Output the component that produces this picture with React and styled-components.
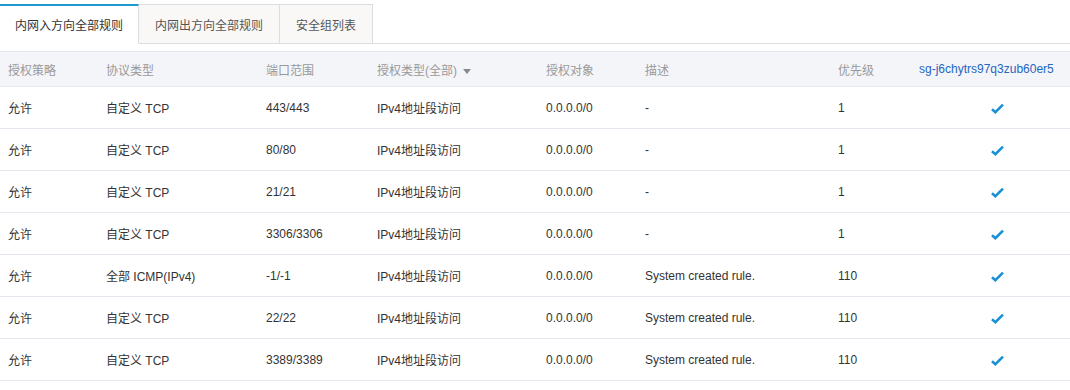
import React from "react";
import styled, { createGlobalStyle } from "styled-components";

const GlobalStyle = createGlobalStyle`
    body {
        margin: 0;
        background: #fff;
        font-family: "Liberation Sans", "Noto Sans CJK SC", sans-serif;
        font-size: 12px;
        color: #333;
    }
`;

const Page = styled.div`
    padding-top: 4px;
    width: 1070px;
`;

const TabBar = styled.div`
    display: flex;
    border-bottom: 1px solid #ddd;
    height: 39px;
`;

const Tab = styled.div`
    box-sizing: border-box;
    flex-shrink: 0;
    height: 40px;
    display: flex;
    align-items: center;
    justify-content: center;
    white-space: nowrap;
    font-size: 12px;
    color: ${(props) => (props.active ? "#333" : "#555")};
    background: ${(props) => (props.active ? "#fff" : "#f9f8f7")};
    border: 1px solid #ddd;
    border-top: ${(props) => (props.active ? "2px solid #1b9ad0" : "1px solid #ddd")};
    border-left: ${(props) => (props.active ? "none" : "1px solid #ddd")};
    border-bottom: ${(props) => (props.active ? "1px solid #fff" : "1px solid #ddd")};
    margin-left: ${(props) => (props.active ? "0" : "-1px")};
    width: ${(props) => props.w}px;
    z-index: ${(props) => (props.active ? 1 : 0)};
`;

const Table = styled.table`
    margin-top: 7px;
    width: 1070px;
    border-collapse: collapse;
    table-layout: fixed;
`;

const HeadCell = styled.th`
    height: 34px;
    padding: 0 0 0 8px;
    text-align: left;
    font-weight: normal;
    color: #999;
    background: #f4f5f9;
    border-top: 1px solid #e3e7ee;
    border-bottom: 1px solid #e3e7ee;
    white-space: nowrap;
`;

const LinkText = styled.span`
    color: #2566c2;
`;

const Caret = styled.span`
    display: inline-block;
    margin-left: 6px;
    vertical-align: middle;
    border-left: 4px solid transparent;
    border-right: 4px solid transparent;
    border-top: 5px solid #888;
`;

const Cell = styled.td`
    height: 41px;
    padding: 0 0 0 8px;
    border-bottom: 1px solid #e3e7ee;
    color: #333;
    white-space: nowrap;
`;

const CheckWrap = styled.span`
    display: inline-block;
    padding-left: 72px;
    line-height: 0;
    vertical-align: middle;
`;

const widths = [98, 160, 111, 169, 99, 193, 81, 159];

const headers = ["授权策略", "协议类型", "端口范围", "授权类型(全部)", "授权对象", "描述", "优先级"];

const rows = [
    ["允许", "自定义 TCP", "443/443", "IPv4地址段访问", "0.0.0.0/0", "-", "1"],
    ["允许", "自定义 TCP", "80/80", "IPv4地址段访问", "0.0.0.0/0", "-", "1"],
    ["允许", "自定义 TCP", "21/21", "IPv4地址段访问", "0.0.0.0/0", "-", "1"],
    ["允许", "自定义 TCP", "3306/3306", "IPv4地址段访问", "0.0.0.0/0", "-", "1"],
    ["允许", "全部 ICMP(IPv4)", "-1/-1", "IPv4地址段访问", "0.0.0.0/0", "System created rule.", "110"],
    ["允许", "自定义 TCP", "22/22", "IPv4地址段访问", "0.0.0.0/0", "System created rule.", "110"],
    ["允许", "自定义 TCP", "3389/3389", "IPv4地址段访问", "0.0.0.0/0", "System created rule.", "110"],
];

function Check() {
    return (
        <svg width="13" height="11" viewBox="0 0 13 11">
            <path d="M1 6.2 L4.4 9.2 L12 1.6" fill="none" stroke="#1a90d6" strokeWidth="2.6" strokeLinejoin="miter" />
        </svg>
    );
}

export default function App() {
    return (
        <Page>
            <GlobalStyle />
            <TabBar>
                <Tab active w={139}>内网入方向全部规则</Tab>
                <Tab w={142}>内网出方向全部规则</Tab>
                <Tab w={94}>安全组列表</Tab>
            </TabBar>
            <Table>
                <colgroup>
                    {widths.map((w, i) => (
                        <col key={i} style={{ width: w }} />
                    ))}
                </colgroup>
                <thead>
                    <tr>
                        {headers.map((h, i) => (
                            <HeadCell key={i}>
                                {h}
                                {i === 3 && <Caret />}
                            </HeadCell>
                        ))}
                        <HeadCell>
                            <LinkText>sg-j6chytrs97q3zub60er5</LinkText>
                        </HeadCell>
                    </tr>
                </thead>
                <tbody>
                    {rows.map((r, i) => (
                        <tr key={i}>
                            {r.map((c, j) => (
                                <Cell key={j}>{c}</Cell>
                            ))}
                            <Cell>
                                <CheckWrap>
                                    <Check />
                                </CheckWrap>
                            </Cell>
                        </tr>
                    ))}
                </tbody>
            </Table>
        </Page>
    );
}
